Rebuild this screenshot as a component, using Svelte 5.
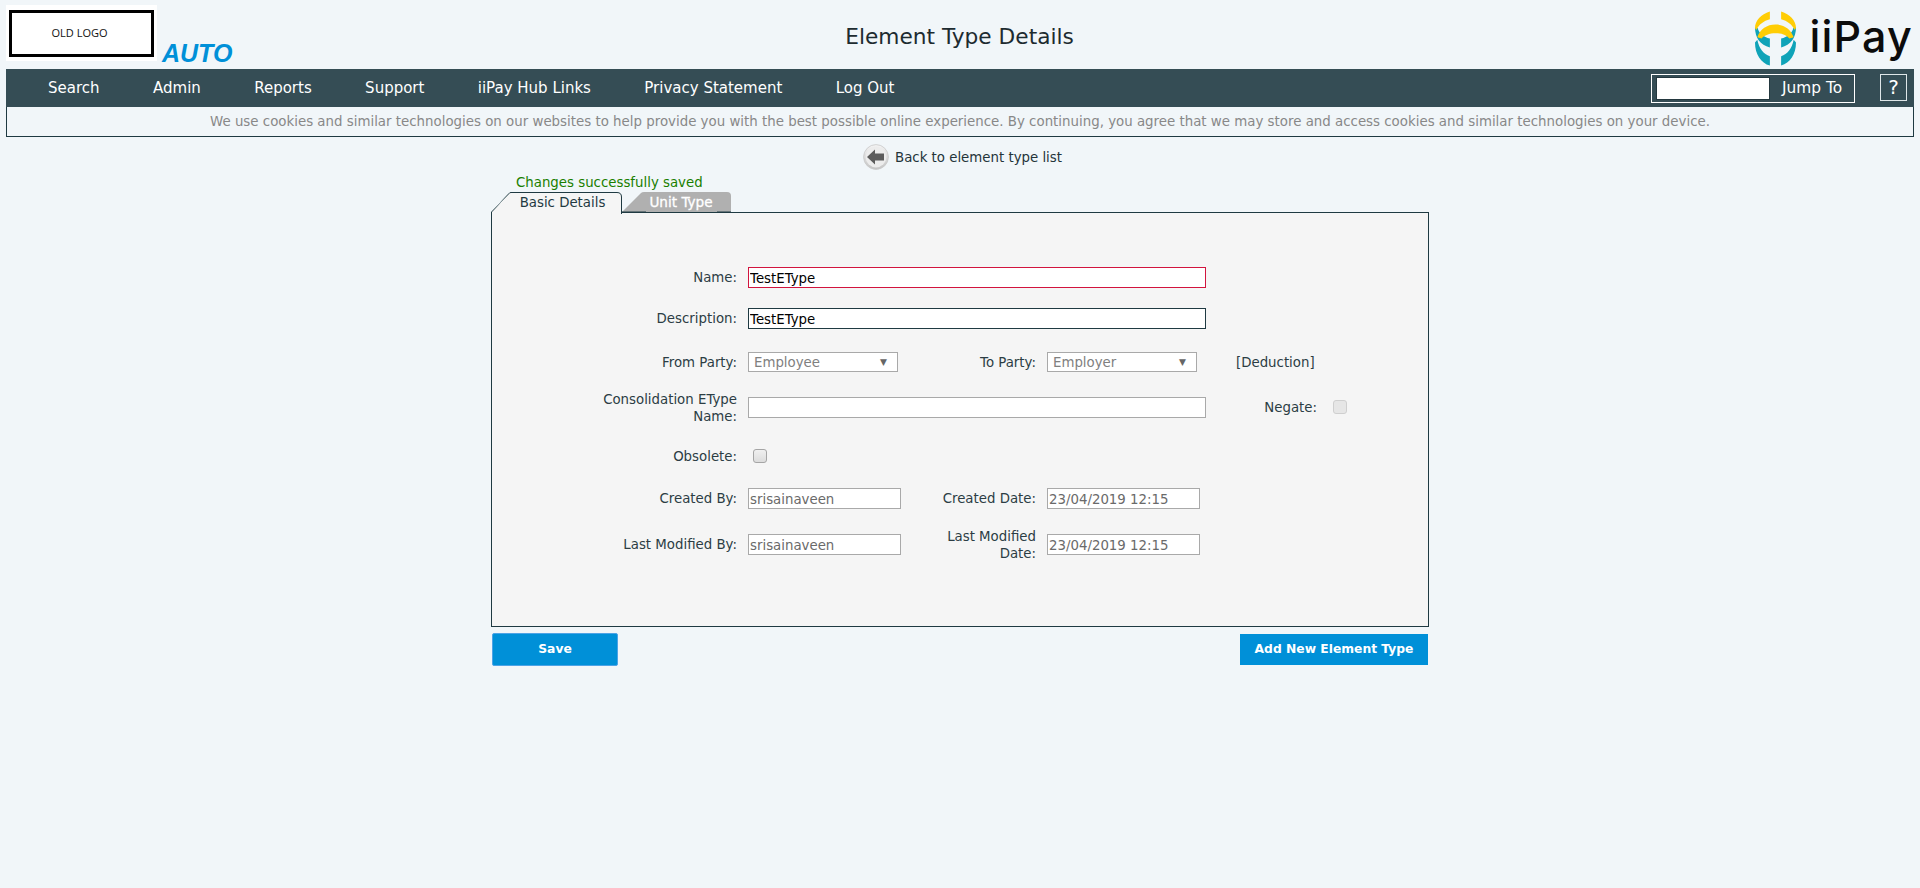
<script lang="ts">
  const navItems = ["Search", "Admin", "Reports", "Support", "iiPay Hub Links", "Privacy Statement", "Log Out"];
  let jumpTo = $state("");
</script>

<div class="page">
  <header class="top">
    <div class="brand">
      <div class="old-logo"><span>OLD LOGO</span></div>
      <span class="auto">AUTO</span>
    </div>
    <h1>Element Type Details</h1>
    <div class="iipay">
      <svg class="iipay-mark" viewBox="38 18 124 164" aria-hidden="true">
        <path fill="#0fa3b8" d="M38 66 C38 98 54 120 83 127 L83 100 C64 96 50 84 46 68 Z" />
        <path fill="#0fa3b8" d="M162 66 C162 98 146 120 117 127 L117 100 C136 96 150 84 154 68 Z" />
        <path fill="#0fa3b8" d="M38 112 C38 148 56 174 83 182 L83 154 C64 148 50 130 45 104 Z" />
        <path fill="#0fa3b8" d="M162 112 C162 148 144 174 117 182 L117 154 C136 148 150 130 155 104 Z" />
        <path fill="#ffcd05" d="M83 18 C56 26 38 46 38 68 L42 74 C50 58 64 47 83 42 Z" />
        <path fill="#ffcd05" d="M117 18 C144 26 162 46 162 68 L158 74 C150 58 136 47 117 42 Z" />
        <path fill="#ffcd05" d="M100 58 C74 58 54 72 45 96 L58 100 C66 90 82 84 100 84 C118 84 134 90 142 100 L155 96 C146 72 126 58 100 58 Z" />
      </svg>
      <span class="iipay-name">iiPay</span>
    </div>
  </header>

  <nav class="menu">
    <ul>
      {#each navItems as item}
        <li>{item}</li>
      {/each}
    </ul>
    <div class="jump">
      <input bind:value={jumpTo} aria-label="Jump To" />
      <span>Jump To</span>
    </div>
    <button class="help">?</button>
  </nav>

  <p class="cookies">
    We use cookies and similar technologies on our websites to help provide you with the best possible online experience. By continuing, you agree that we may store and access cookies and similar technologies on your device.
  </p>

  <div class="back">
    <svg viewBox="0 0 26 26" aria-hidden="true">
      <defs>
        <linearGradient id="ring" x1="0" y1="0" x2="0" y2="1">
          <stop offset="0" stop-color="#f4f4f4" />
          <stop offset="1" stop-color="#c4c4c4" />
        </linearGradient>
      </defs>
      <circle cx="13" cy="13" r="12.4" fill="url(#ring)" stroke="#c8c8c8" stroke-width="0.8" />
      <circle cx="13" cy="13" r="10.4" fill="#ececec" />
      <path fill="#5c5c5c" d="M4 13 L12 5.5 L12 9.5 L21 9.5 L21 16.5 L12 16.5 L12 20.5 Z" />
    </svg>
    <span>Back to element type list</span>
  </div>

  <main class="content">
    <p class="saved">Changes successfully saved</p>
    <div class="tabs">
      <div class="tab tab--active">
        <svg viewBox="0 0 131 22" aria-hidden="true">
          <path fill="#f5f5f5" stroke="#1f3a42" d="M0.5 22 L0.5 20 L18 1.5 Q18.5 0.5 20 0.5 L126 0.5 Q130.5 0.5 130.5 5 L130.5 22" />
          <path fill="none" stroke="#8a9a9e" d="M0.5 20 L18 1.5" />
        </svg>
        <span>Basic Details</span>
      </div>
      <div class="tab tab--idle">
        <svg viewBox="0 0 110 21" aria-hidden="true">
          <path fill="#b0b0b0" d="M0 20 L19 1 Q20 0 22 0 L105 0 Q109 0 109 4 L109 20 Z" />
          <rect x="0" y="19.5" width="24" height="1.5" fill="#1f3a42" />
          <rect x="95" y="19.5" width="14" height="1.5" fill="#1f3a42" />
        </svg>
        <span>Unit Type</span>
      </div>
    </div>

    <section class="panel">
      <form class="form">
        <div class="row row--a">
          <label class="lbl" for="name">Name:</label>
          <input id="name" class="text text--error wide" value="TestEType" />
        </div>

        <div class="row row--a">
          <label class="lbl" for="desc">Description:</label>
          <input id="desc" class="text text--strong wide" value="TestEType" />
        </div>

        <div class="row row--b">
          <span class="lbl">From Party:</span>
          <div class="pick">
            <select disabled><option>Employee</option></select>
            <i>▼</i>
          </div>
          <span class="lbl">To Party:</span>
          <div class="pick">
            <select disabled><option>Employer</option></select>
            <i>▼</i>
          </div>
          <span class="deduction">[Deduction]</span>
        </div>

        <div class="row row--c">
          <label class="lbl" for="cons">Consolidation EType<br />Name:</label>
          <input id="cons" class="text wide" value="" />
          <label class="lbl" for="negate">Negate:</label>
          <input id="negate" class="check check--off" type="checkbox" disabled />
        </div>

        <div class="row row--d">
          <label class="lbl" for="obsolete">Obsolete:</label>
          <input id="obsolete" class="check" type="checkbox" />
        </div>

        <div class="row row--e">
          <span class="lbl">Created By:</span>
          <input class="text text--ro" readonly value="srisainaveen" />
          <span class="lbl">Created Date:</span>
          <input class="text text--ro short" readonly value="23/04/2019 12:15" />
        </div>

        <div class="row row--f">
          <span class="lbl">Last Modified By:</span>
          <input class="text text--ro" readonly value="srisainaveen" />
          <span class="lbl">Last Modified<br />Date:</span>
          <input class="text text--ro short" readonly value="23/04/2019 12:15" />
        </div>
      </form>
    </section>

    <div class="actions">
      <button class="btn btn--save">Save</button>
      <button class="btn btn--add">Add New Element Type</button>
    </div>
  </main>
</div>

<style>
  :global(body) {
    background: #f1f6f9;
    font-family: "DejaVu Sans", Verdana, sans-serif;
    font-size: 13.33px;
    color: #1f3a42;
  }

  .page {
    height: 888px;
    overflow: hidden;
  }

  .top {
    height: 69px;
    padding: 5px 7px 0 6px;
    box-sizing: border-box;
    display: grid;
    grid-template-columns: 1fr auto 1fr;
  }

  .brand {
    display: flex;
    align-items: flex-start;
    gap: 5px;
  }

  .old-logo {
    width: 151px;
    height: 56px;
    background: #fff;
    padding: 5px 3px 4px;
    box-sizing: border-box;
  }

  .old-logo span {
    display: flex;
    height: 100%;
    align-items: center;
    justify-content: center;
    padding: 0 4px 2px 0;
    box-sizing: border-box;
    border: 3px solid #000;
    font-family: "Open Sans", sans-serif;
    font-size: 11px;
    color: #111;
  }

  .auto {
    margin-top: 33px;
    font-family: "Liberation Sans", Arial, sans-serif;
    font-size: 25px;
    line-height: 30px;
    font-weight: bold;
    font-style: italic;
    color: #0090d8;
  }

  h1 {
    margin: 20px 0 0;
    font-size: 21.7px;
    line-height: 24px;
    font-weight: normal;
    color: #1d2b30;
  }

  .iipay {
    display: flex;
    justify-content: flex-end;
    gap: 13px;
  }

  .iipay-mark {
    width: 41px;
    height: 55px;
    margin-top: 6px;
  }

  .iipay-name {
    margin-top: 5px;
    font-family: Inter, sans-serif;
    font-size: 43px;
    font-weight: 500;
    letter-spacing: 1.2px;
    line-height: 52px;
    color: #0c0c0c;
  }

  .menu {
    height: 38px;
    margin: 0 6px;
    background: #354d55;
    display: flex;
    align-items: center;
    color: #fff;
  }

  .menu ul {
    display: flex;
    flex: 1;
    margin: 0;
    padding: 0 0 0 15.4px;
    list-style: none;
    font-size: 15px;
  }

  .menu li {
    padding: 0 26.7px;
  }

  .jump {
    width: 204px;
    height: 29px;
    box-sizing: border-box;
    border: 1px solid #fff;
    display: flex;
    align-items: center;
    gap: 12px;
    padding-left: 4px;
    font-size: 15.4px;
  }

  .jump input {
    width: 114px;
    height: 23px;
    box-sizing: border-box;
    border: 1px solid #24383f;
    background: #fff;
    padding: 0;
  }

  .help {
    width: 27px;
    height: 27px;
    margin: 0 7px 2px 25px;
    padding: 0;
    background: transparent;
    border: 1px solid #dfe6e8;
    color: #fff;
    font: 20px "DejaVu Sans", sans-serif;
  }

  .cookies {
    height: 30px;
    margin: 0 6px;
    box-sizing: border-box;
    border: 1px solid #1f3a42;
    border-top: 0;
    text-align: center;
    line-height: 30px;
    font-size: 13.37px;
    color: #888;
  }

  .back {
    height: 26px;
    margin-top: 7px;
    padding-left: 5px;
    display: flex;
    justify-content: center;
    align-items: center;
    gap: 6px;
    color: #24343a;
  }

  .back svg {
    width: 26px;
    height: 26px;
  }

  .content {
    width: 938px;
    margin: 0 auto;
  }

  .saved {
    margin: 5px 0 1px 25px;
    line-height: 16px;
    color: #1a7f00;
  }

  .tabs {
    display: flex;
    height: 21px;
    margin-bottom: -1px;
    position: relative;
    z-index: 1;
  }

  .tab {
    position: relative;
    display: flex;
    align-items: center;
    justify-content: center;
  }

  .tab svg {
    position: absolute;
    inset: 0;
    width: 100%;
    height: 100%;
  }

  .tab span {
    position: relative;
    padding-bottom: 1px;
  }

  .tab--active {
    width: 131px;
    height: 22px;
  }

  .tab--active span {
    padding-left: 12px;
  }

  .tab--idle {
    width: 110px;
    color: #fff;
  }

  .tab--idle span {
    padding-left: 12px;
    margin-right: 4px;
    font-size: 13.6px;
    -webkit-text-stroke: 0.3px #fff;
  }

  .panel {
    height: 415px;
    box-sizing: border-box;
    background: #f5f5f5;
    border: 1px solid #1f3a42;
  }

  .form {
    padding-top: 44px;
  }

  .row {
    display: grid;
    grid-template-columns: 245px 153px 124px 159px 100px auto;
    column-gap: 11px;
    align-items: center;
  }

  .row--a {
    height: 41px;
  }

  .row--b {
    height: 46px;
  }

  .row--c {
    height: 45px;
  }

  .row--d {
    height: 50px;
    padding-top: 2px;
    box-sizing: border-box;
  }

  .row--e {
    height: 37px;
  }

  .row--f {
    height: 55px;
  }

  .lbl {
    text-align: right;
    line-height: 17px;
    color: #2c3d44;
  }

  .text {
    box-sizing: border-box;
    height: 21px;
    width: 100%;
    margin: 0;
    padding: 1px 0 0 1px;
    background: #fff;
    font: 13.33px "DejaVu Sans", sans-serif;
    color: #000;
    border: 1px solid #a9a9a9;
    outline: none;
  }

  .wide {
    grid-column: 2 / 5;
  }

  .short {
    width: 153px;
  }

  .text--error {
    border-color: #d2143e;
  }

  .text--strong {
    border-color: #1f3a42;
  }

  .text--ro {
    color: #6a6a6a;
  }

  .pick {
    position: relative;
    width: 150px;
    height: 20px;
  }

  .pick select {
    appearance: none;
    box-sizing: border-box;
    width: 100%;
    height: 100%;
    margin: 0;
    padding: 0 0 0 5px;
    border: 1px solid #a9a9a9;
    border-radius: 0;
    background: #fff;
    opacity: 1;
    font: 13.33px "DejaVu Sans", sans-serif;
    color: #808080;
  }

  .pick i {
    position: absolute;
    right: 11px;
    top: 3px;
    font-style: normal;
    font-size: 9px;
    line-height: 14px;
    color: #666;
  }

  .deduction {
    margin-left: 19px;
    white-space: nowrap;
    color: #2c3d44;
  }

  .check {
    appearance: none;
    box-sizing: border-box;
    width: 14px;
    height: 14px;
    margin: 0 0 0 5px;
    border: 1px solid #a5a5a5;
    border-radius: 3px;
    background: linear-gradient(#f0f0f0, #dcdcdc);
  }

  .check--off {
    border-color: #cfcfcf;
    background: #e6e6e6;
    transform: translateY(-1px);
  }

  .actions {
    display: flex;
    justify-content: space-between;
    margin: 6px 1px 0 1px;
  }

  .btn {
    box-sizing: border-box;
    background: #0090d8;
    color: #fff;
    border: 1px solid #0090d8;
    font: bold 12.3px "DejaVu Sans", sans-serif;
    padding: 0 0 2px;
  }

  .btn--save {
    width: 126px;
    height: 33px;
    border-color: #4da3e6;
    border-radius: 2px;
  }

  .btn--add {
    width: 188px;
    height: 31px;
    margin-top: 1px;
    padding-bottom: 2px;
  }
</style>
